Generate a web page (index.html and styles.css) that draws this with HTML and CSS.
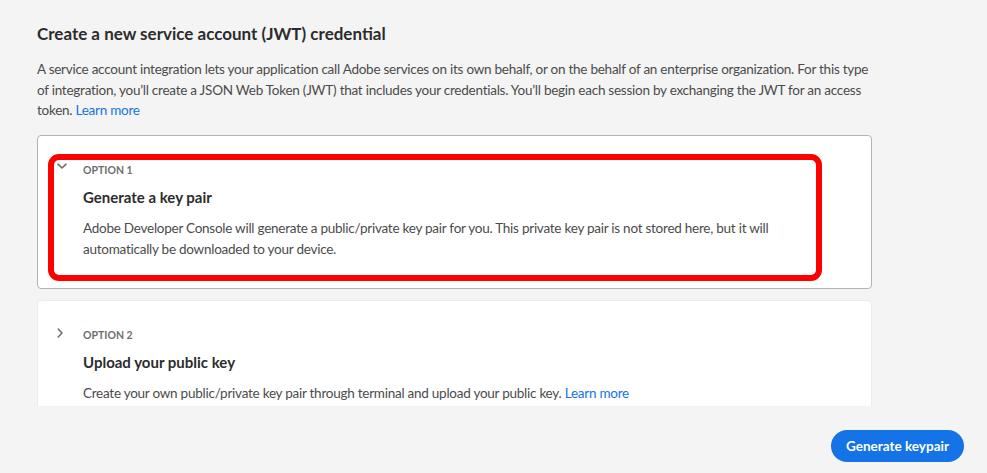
FILE: index.html
```html
<!DOCTYPE html>
<html lang="en">
<head>
<meta charset="utf-8">
<title>Create a new service account (JWT) credential</title>
<link rel="stylesheet" href="styles.css">
</head>
<body>
<div class="page">
  <div class="scroll">
    <h1 class="title">Create a new service account (JWT) credential</h1>
    <p class="intro">A service account integration lets your application call Adobe services on its own behalf, or on the behalf of an enterprise organization. For this type of integration, you’ll create a JSON Web Token (JWT) that includes your credentials. You’ll begin each session by exchanging the JWT for an access token. <a class="link" href="#">Learn more</a></p>

    <div class="card card-selected">
      <svg class="chev chev-down" width="10" height="7" viewBox="0 0 10 7"><path d="M1 1.2 L5 5 L9 1.2" fill="none" stroke="#6e6e6e" stroke-width="1.6" stroke-linecap="round" stroke-linejoin="round"/></svg>
      <div class="opt-label">OPTION 1</div>
      <div class="opt-title">Generate a key pair</div>
      <p class="opt-desc">Adobe Developer Console will generate a public/private key pair for you. This private key pair is not stored here, but it will automatically be downloaded to your device.</p>
      <div class="annot"></div>
    </div>

    <div class="card card-plain">
      <svg class="chev chev-right" width="7" height="10" viewBox="0 0 7 10"><path d="M1.2 1 L5 5 L1.2 9" fill="none" stroke="#6e6e6e" stroke-width="1.6" stroke-linecap="round" stroke-linejoin="round"/></svg>
      <div class="opt-label">OPTION 2</div>
      <div class="opt-title">Upload your public key</div>
      <p class="opt-desc">Create your own public/private key pair through terminal and upload your public key. <a class="link" href="#">Learn more</a></p>
    </div>
  </div>
  <div class="footer">
    <button class="btn">Generate keypair</button>
  </div>
</div>
</body>
</html>
```

FILE: styles.css
```css
* { box-sizing: border-box; }
html, body {
  margin: 0;
  padding: 0;
  background: #f4f4f4;
  font-family: Lato, "Open Sans", sans-serif;
  color: #4b4b4b;
}
.page {
  width: 987px;
  height: 473px;
  display: flex;
  flex-direction: column;
}
.scroll {
  height: 406px;
  overflow: hidden;
  padding: 22px 115px 0 37px;
}
.title {
  margin: 0;
  font-size: 17px;
  line-height: 24px;
  font-weight: 700;
  color: #2c2c2c;
}
.intro {
  margin: 13px 0 0;
  font-size: 13.5px;
  letter-spacing: -0.25px;
  line-height: 20.5px;
}
.link {
  color: #1473e6;
  text-decoration: none;
}
.card {
  position: relative;
  background: #fff;
  border-radius: 4px;
  padding: 26px 46px 28px 45px;
}
.card-selected {
  margin-top: 14px;
  border: 1px solid #b3b3b3;
}
.card-plain {
  margin-top: 11px;
  border: 1px solid #ececec;
}
.chev {
  position: absolute;
  left: 19px;
}
.chev-down { top: 27px; }
.chev-right { top: 27px; }
.opt-label {
  font-size: 10.5px;
  line-height: 16px;
  font-weight: 700;
  color: #6e6e6e;
}
.opt-title {
  margin-top: 8px;
  font-size: 15px;
  line-height: 22px;
  font-weight: 700;
  color: #2c2c2c;
}
.opt-desc {
  margin: 10px 0 0;
  font-size: 13.5px;
  letter-spacing: -0.25px;
  line-height: 21px;
  color: #4b4b4b;
}
.annot {
  position: absolute;
  left: 10px;
  top: 18px;
  width: 774px;
  height: 127px;
  border: 6px solid #ff0000;
  border-radius: 11px;
  pointer-events: none;
}
.footer {
  flex: 1;
  display: flex;
  justify-content: flex-end;
  align-items: flex-start;
  padding: 24px 23px 0 0;
}
.btn {
  width: 133px;
  height: 32px;
  padding: 0;
  border: none;
  border-radius: 16px;
  background: #1473e6;
  color: #fff;
  font-family: Lato, "Open Sans", sans-serif;
  font-size: 13.5px;
  font-weight: 700;
}
```
